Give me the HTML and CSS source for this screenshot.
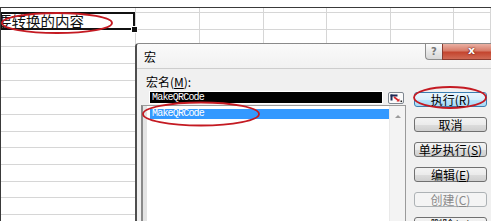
FILE: index.html
```html
<!DOCTYPE html>
<html lang="zh-CN">
<head>
<meta charset="utf-8">
<title>宏</title>
<link rel="stylesheet" href="styles.css">
</head>
<body>
<div class="sheet">
  <div class="c"></div><div class="c"></div><div class="c"></div><div class="c"></div><div class="c"></div><div class="c"></div><div class="c"></div>
  <div class="c sel">要转换的内容</div><div class="c"></div><div class="c"></div><div class="c"></div><div class="c"></div><div class="c"></div><div class="c"></div>
  <div class="c"></div><div class="c"></div><div class="c"></div><div class="c"></div><div class="c"></div><div class="c"></div><div class="c"></div>
  <div class="c"></div><div class="c"></div><div class="c"></div><div class="c"></div><div class="c"></div><div class="c"></div><div class="c"></div>
  <div class="c"></div><div class="c"></div><div class="c"></div><div class="c"></div><div class="c"></div><div class="c"></div><div class="c"></div>
  <div class="c"></div><div class="c"></div><div class="c"></div><div class="c"></div><div class="c"></div><div class="c"></div><div class="c"></div>
  <div class="c"></div><div class="c"></div><div class="c"></div><div class="c"></div><div class="c"></div><div class="c"></div><div class="c"></div>
  <div class="c"></div><div class="c"></div><div class="c"></div><div class="c"></div><div class="c"></div><div class="c"></div><div class="c"></div>
  <div class="c"></div><div class="c"></div><div class="c"></div><div class="c"></div><div class="c"></div><div class="c"></div><div class="c"></div>
  <div class="c"></div><div class="c"></div><div class="c"></div><div class="c"></div><div class="c"></div><div class="c"></div><div class="c"></div>
  <div class="c"></div><div class="c"></div><div class="c"></div><div class="c"></div><div class="c"></div><div class="c"></div><div class="c"></div>
  <div class="c"></div><div class="c"></div><div class="c"></div><div class="c"></div><div class="c"></div><div class="c"></div><div class="c"></div>
  <div class="c"></div><div class="c"></div><div class="c"></div><div class="c"></div><div class="c"></div><div class="c"></div><div class="c"></div>
  <div class="c"></div><div class="c"></div><div class="c"></div><div class="c"></div><div class="c"></div><div class="c"></div><div class="c"></div>
</div>

<div class="dialog">
  <div class="titlebar">
    <div class="title">宏</div>
    <div class="tbtns">
      <div class="help">?</div>
      <div class="close">x</div>
    </div>
  </div>
  <div class="dbody">
    <div class="left">
      <div class="lbl">宏名(<u>M</u>):</div>
      <div class="frow">
        <div class="field">MakeQRCode</div>
        <div class="refbtn">
          <svg width="16" height="12" viewBox="0 0 16 12">
            <rect x="0.5" y="0.5" width="15" height="11" rx="1.5" fill="#fbfbfb" stroke="#7f8790"/>
            <rect x="2.5" y="2.5" width="7" height="2" fill="#1e2a55"/>
            <rect x="2.5" y="2.5" width="2" height="6" fill="#1e2a55"/>
            <path d="M6 5 L10.5 8.5" stroke="#d8262b" stroke-width="1.6"/>
            <path d="M8.5 9.5 L11.5 9.5 L11.5 6.5 Z" fill="#d8262b"/>
            <rect x="12.5" y="8.5" width="1.6" height="1.6" fill="#222"/>
          </svg>
        </div>
      </div>
      <div class="list">
        <div class="items">
          <div class="item on">MakeQRCode</div>
        </div>
        <div class="scroll"><div class="up"><span class="tri"></span></div></div>
      </div>
    </div>
    <div class="btns">
      <div class="btn def">执行(<u>R</u>)</div>
      <div class="btn">取消</div>
      <div class="btn">单步执行(<u>S</u>)</div>
      <div class="btn">编辑(<u>E</u>)</div>
      <div class="btn dis">创建(<u>C</u>)</div>
      <div class="btn">删除(<u>D</u>)</div>
    </div>
  </div>
</div>

<svg class="marks" width="491" height="221" viewBox="0 0 491 221">
  <ellipse cx="57" cy="23" rx="55" ry="10" fill="none" stroke="#c41a22" stroke-width="1.8"/>
  <ellipse cx="201" cy="114" rx="58" ry="11.5" fill="none" stroke="#c41a22" stroke-width="1.8"/>
  <ellipse cx="450" cy="97.5" rx="36" ry="10.5" fill="none" stroke="#c41a22" stroke-width="1.8"/>
</svg>
</body>
</html>
```
FILE: styles.css
```css
* { box-sizing: border-box; margin: 0; padding: 0; }
html, body { width: 491px; height: 221px; overflow: hidden; background: #fff; }
body {
  position: relative;
  font-family: "Noto Sans CJK SC", "Noto Sans", sans-serif;
  font-size: 12px;
  color: #000;
}

/* spreadsheet */
.sheet {
  margin-top: 7px;
  height: 214px;
  overflow: hidden;
  border-top: 1px solid #3a3a3a;
  border-left: 1px solid #3a3a3a;
  display: grid;
  grid-template-columns: 135px 64px 64px 63px 64px 63px 1fr;
  grid-template-rows: 5px 17px 17px 17px 17px 17px 17px 17px 16px 17px 17px 16px 17px 17px;
}
.c {
  border-right: 1px solid #d6d6d6;
  border-bottom: 1px solid #d6d6d6;
}
.sel {
  position: relative;
  font-size: 14.5px;
  line-height: 16px;
  white-space: nowrap;
  text-indent: -4px;
  color: #111;
}
.sel::after {
  content: "";
  position: absolute;
  left: -1px; top: -1px; right: 0; bottom: -1px;
  border: 2px solid #111;
}
.sel::before {
  content: "";
  position: absolute;
  right: -3px; bottom: -4px;
  width: 5px; height: 5px;
  background: #111;
  border: 1px solid #fff;
  z-index: 1;
}

/* dialog */
.dialog {
  position: absolute;
  left: 135px;
  top: 43px;
  width: 365px;
  height: 178px;
  overflow: hidden;
  background: #f0f0f0;
  border-left: 2px solid #4e4e4e;
  border-top: 1px solid #8a8a8a;
  border-top-left-radius: 4px;
}
.titlebar {
  height: 25px;
  display: flex;
  align-items: flex-start;
  background: linear-gradient(#fafafa, #f1f1f1);
  border-bottom: 1px solid #cdcdcd;
}
.title {
  padding-left: 7px;
  padding-top: 1px;
  line-height: 23px;
}
.tbtns {
  margin-left: auto;
  display: flex;
}
.help {
  width: 17px;
  height: 16px;
  border: 1px solid #8d8d8d;
  border-top: none;
  border-right: none;
  border-bottom-left-radius: 4px;
  background: linear-gradient(#fdfdfd, #e6e6e6 55%, #d8d8d8);
  color: #777;
  font-family: "DejaVu Sans", sans-serif;
  font-size: 10px;
  font-weight: bold;
  line-height: 15px;
  text-align: center;
}
.close {
  width: 58px;
  height: 16px;
  border: 1px solid #8a3c30;
  border-top: none;
  border-right: none;
  background: linear-gradient(#eab0a3, #d77c69 45%, #c4452f 55%, #d06a55);
  color: #fff;
  font-family: "DejaVu Sans", sans-serif;
  font-size: 11px;
  font-weight: bold;
  line-height: 14px;
  text-align: center;
  text-shadow: 0 0 2px #6a1a10, 0 0 1px #6a1a10;
}
.dbody {
  display: flex;
  padding: 5px 0 0 4px;
}
.left {
  width: 265px;
  display: flex;
  flex-direction: column;
}
.lbl {
  padding-left: 5px;
  height: 16px;
  line-height: 16px;
}
.frow {
  margin-top: 1px;
  height: 13px;
  display: flex;
  align-items: flex-start;
}
.field {
  margin-left: 8px;
  width: 234px;
  height: 13px;
  border: 1px solid #fff;
  background: #000;
  color: #fff;
  font-family: "Liberation Mono", monospace;
  font-size: 10px;
  letter-spacing: -0.8px;
  line-height: 11px;
  padding-left: 2px;
}
.refbtn {
  margin-left: 5px;
  margin-top: 1px;
  width: 16px;
  height: 12px;
}
.refbtn svg { display: block; }
.list {
  margin-top: 1px;
  height: 120px;
  display: flex;
  background: #fff;
  border: 1px solid #9a9a9a;
  border-left: 2px solid #8a8a8a;
  box-shadow: inset 4px 0 0 #e4e4e4;
}
.items {
  flex: 1;
  padding: 3px 0 0 7px;
}
.item {
  height: 10px;
  line-height: 10px;
  font-family: "Liberation Mono", monospace;
  font-size: 10px;
  letter-spacing: -0.8px;
  padding-left: 2px;
}
.item.on {
  background: #3399ff;
  color: #fff;
}
.scroll {
  width: 16px;
  background: #f3f3f3;
  border-left: 1px solid #e9e9e9;
}
.up {
  height: 20px;
  display: flex;
  align-items: center;
  justify-content: center;
}
.tri {
  width: 0; height: 0;
  border-left: 3px solid transparent;
  border-right: 3px solid transparent;
  border-bottom: 3px solid #9a9a9a;
}
.btns {
  margin-left: 8px;
  padding-top: 18px;
  display: flex;
  flex-direction: column;
  gap: 10px;
}
.btn {
  width: 73px;
  height: 15px;
  flex: none;
  border: 1px solid #707070;
  border-radius: 3px;
  background: linear-gradient(#f3f3f3, #ebebeb 50%, #dddddd 51%, #cfcfcf);
  line-height: 13px;
  text-align: center;
  white-space: nowrap;
}
.btn.def {
  border-color: #3c7fb1;
  background: linear-gradient(#eaf6fd, #d9f0fc 50%, #bee6fd 51%, #a7d9f5);
}
.btn.dis {
  border-color: #adb2b5;
  background: #f4f4f4;
  color: #8a8a8a;
}

/* annotation overlay */
.marks {
  position: absolute;
  left: 0;
  top: 0;
  pointer-events: none;
}
```
